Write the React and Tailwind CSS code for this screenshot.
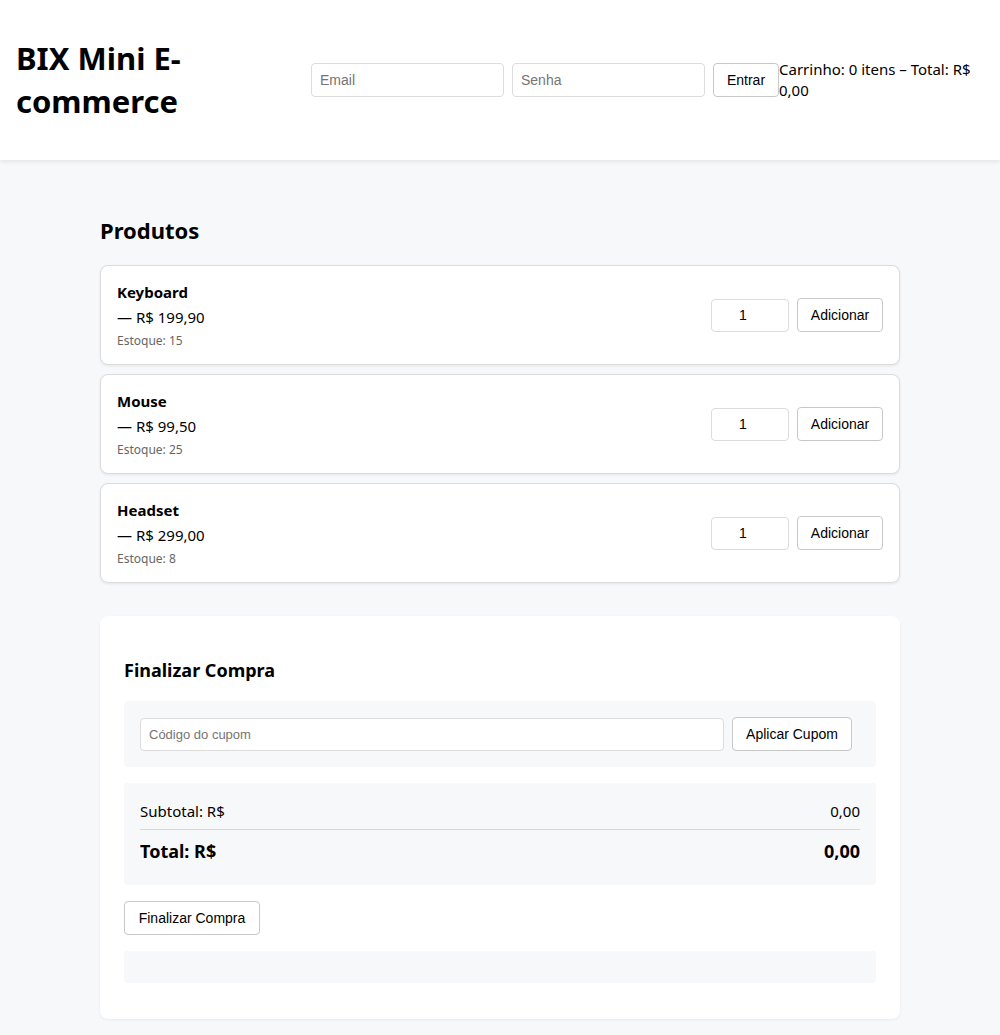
const products = [
  { name: "Keyboard", price: "199,90", stock: 15 },
  { name: "Mouse", price: "99,50", stock: 25 },
  { name: "Headset", price: "299,00", stock: 8 },
];

const ui = { fontFamily: '"Noto Sans", "Open Sans", sans-serif' };

const Header = () => (
  <header className="flex items-center bg-white px-4 py-4 shadow-[0_2px_4px_rgba(0,0,0,0.08)]">
    <h1 className="my-[21px] w-[279px] shrink-0 text-[31px] font-bold leading-[43px] text-black">
      BIX Mini E-commerce
    </h1>
    <div className="ml-4 flex items-center gap-2 font-['Liberation_Sans',Arial,sans-serif] text-sm">
      <input
        placeholder="Email"
        className="h-[34px] w-[193px] rounded border border-[#dcdcdc] px-2 placeholder:text-[#757575]"
      />
      <input
        placeholder="Senha"
        className="h-[34px] w-[193px] rounded border border-[#dcdcdc] px-2 placeholder:text-[#757575]"
      />
      <button className="h-[34px] w-[66px] rounded border border-[#c8c8c8] bg-white text-black">
        Entrar
      </button>
    </div>
    <span className="w-[205px] text-[15px] leading-[21px] text-black">
      Carrinho: 0 itens – Total: R$ 0,00
    </span>
  </header>
);

const ProductCard = ({ p }) => (
  <div className="flex h-[100px] items-center justify-between rounded-lg border border-[#dcdcdc] bg-white px-4 shadow-[0_1px_3px_rgba(0,0,0,0.08)]">
    <div className="flex flex-col pt-[2px]">
      <span className="text-[15px] font-bold leading-[22px] text-black">{p.name}</span>
      <span className="text-[15px] leading-[28px] text-black">— R$ {p.price}</span>
      <span className="text-xs leading-[20px] text-[#666]">Estoque: {p.stock}</span>
    </div>
    <div className="flex items-center gap-2 font-['Liberation_Sans',Arial,sans-serif] text-sm">
      <input
        defaultValue="1"
        className="h-[33px] w-[78px] rounded border border-[#dcdcdc] pr-[14px] text-center text-black"
      />
      <button className="h-[34px] w-[86px] rounded border border-[#c8c8c8] bg-white text-black">
        Adicionar
      </button>
    </div>
  </div>
);

const Checkout = () => (
  <section className="mt-[33px] rounded-lg bg-white px-6 pt-[40px] pb-[36px] shadow-[0_1px_3px_rgba(0,0,0,0.06)]">
    <h2 className="text-lg font-bold leading-[28px] text-black">Finalizar Compra</h2>
    <div className="mt-[17px] flex items-center gap-2 rounded bg-[#f7f8fa] py-4 pl-4 pr-6 font-['Liberation_Sans',Arial,sans-serif]">
      <input
        placeholder="Código do cupom"
        className="h-[33px] flex-1 rounded border border-[#dcdcdc] bg-white px-2 text-sm placeholder:text-[13px] placeholder:text-[#757575]"
      />
      <button className="h-[34px] w-[120px] rounded border border-[#c8c8c8] bg-white text-sm text-black">
        Aplicar Cupom
      </button>
    </div>
    <div className="mt-4 rounded bg-[#f7f8fa] px-4 pt-[16px] pb-[20px]">
      <div className="flex justify-between pb-[6px] text-[15px] leading-[24px] text-black">
        <span>Subtotal: R$</span>
        <span>0,00</span>
      </div>
      <div className="flex justify-between border-t border-[#d6d6d6] pt-[7px] text-lg font-bold leading-[28px] text-black">
        <span>Total: R$</span>
        <span>0,00</span>
      </div>
    </div>
    <button className="mt-4 h-[34px] w-[136px] rounded border border-[#c8c8c8] bg-white font-['Liberation_Sans',Arial,sans-serif] text-sm text-black">
      Finalizar Compra
    </button>
    <div className="mt-4 h-[32px] rounded bg-[#f7f8fa]"></div>
  </section>
);

export default function App() {
  return (
    <div style={ui} className="min-h-screen bg-[#f7f8fa]">
      <Header />
      <main className="mx-auto max-w-[800px] pt-[55px] pb-4">
        <h2 className="mb-[20px] text-[22px] font-bold leading-[30px] text-black">Produtos</h2>
        <div className="flex flex-col gap-[9px]">
          {products.map((p) => (
            <ProductCard key={p.name} p={p} />
          ))}
        </div>
        <Checkout />
      </main>
    </div>
  );
}
